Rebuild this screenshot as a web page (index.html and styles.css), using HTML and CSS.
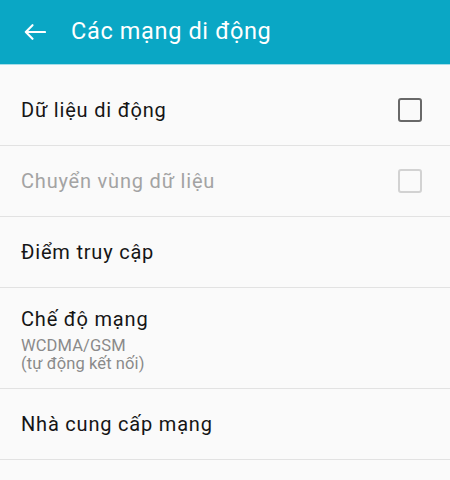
FILE: index.html
```html
<!DOCTYPE html>
<html lang="vi">
<head>
<meta charset="utf-8">
<link rel="stylesheet" href="styles.css">
</head>
<body>
<header class="appbar">
  <svg class="back" width="22" height="16" viewBox="0 0 22 16"><path d="M21 8H2M8.5 1.2L1.8 8l6.7 6.8" fill="none" stroke="#fff" stroke-width="2.1" stroke-linecap="round" stroke-linejoin="round"/></svg>
  <h1 class="title">Các mạng di động</h1>
</header>
<main class="list">
  <div class="row">
    <div class="label">Dữ liệu di động</div>
    <span class="checkbox"></span>
  </div>
  <div class="row disabled">
    <div class="label">Chuyển vùng dữ liệu</div>
    <span class="checkbox"></span>
  </div>
  <div class="row">
    <div class="label">Điểm truy cập</div>
  </div>
  <div class="row tall">
    <div class="text">
      <div class="label">Chế độ mạng</div>
      <div class="sub">WCDMA/GSM</div>
      <div class="sub">(tự động kết nối)</div>
    </div>
  </div>
  <div class="row">
    <div class="label">Nhà cung cấp mạng</div>
  </div>
</main>
</body>
</html>
```
FILE: styles.css
```css
html, body {
  margin: 0;
  padding: 0;
  background: #fafafa;
  font-family: Roboto, "Noto Sans", sans-serif;
}
.appbar {
  height: 64px;
  background: #0aa7c5;
  display: flex;
  align-items: center;
  padding-left: 24px;
  border-bottom: 1px solid #a6dde8;
}
.back {
  width: 22px;
  height: 16px;
  flex: none;
}
.title {
  margin: 0 0 3px 25px;
  font-size: 23.5px;
  font-weight: 400;
  color: #fff;
  letter-spacing: 0.65px;
}
.list {
  padding-top: 10px;
}
.row {
  height: 70px;
  border-bottom: 1px solid #e2e2e2;
  display: flex;
  align-items: center;
  justify-content: space-between;
  padding: 0 28px 0 21px;
}
.row.tall {
  height: 96px;
  padding-top: 4px;
}
.label {
  font-size: 20px;
  letter-spacing: 0.8px;
  color: #151515;
}
.text .label {
  line-height: 24px;
  margin-bottom: 6px;
}
.row.disabled .label {
  color: #a3a3a3;
}
.sub {
  font-size: 16.5px;
  color: #8a8a8a;
  line-height: 18px;
  letter-spacing: 0.1px;
}
.checkbox {
  width: 20px;
  height: 20px;
  border: 2px solid #686868;
  border-radius: 3px;
  flex: none;
}
.row.disabled .checkbox {
  border-color: #d2d2d2;
}
```
